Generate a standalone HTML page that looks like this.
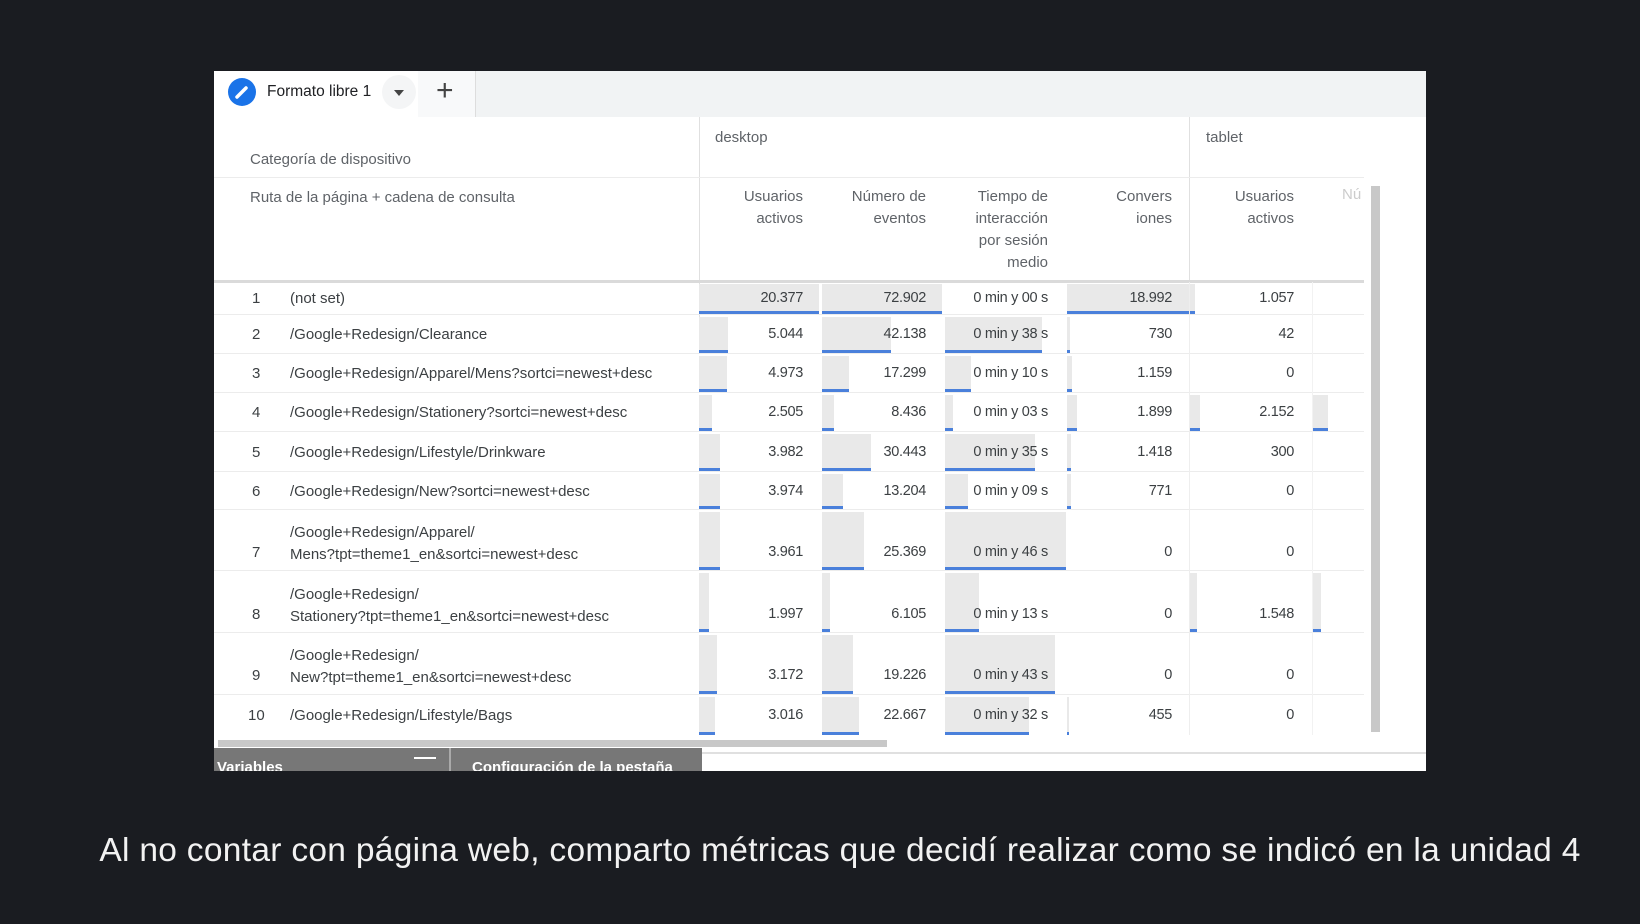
<!DOCTYPE html>
<html><head><meta charset="utf-8"><style>
*{margin:0;padding:0;box-sizing:border-box}
body{width:1640px;height:924px;background:#1a1c21;position:relative;overflow:hidden;font-family:"Liberation Sans",sans-serif;color:#3c4043}
#p{position:absolute;left:214px;top:71px;width:1212px;height:700px;background:#fff;overflow:hidden}
.a{position:absolute}
.row{position:absolute;left:0;width:1150px;border-bottom:1px solid #ececec;font-size:15px}
.g{position:absolute;bottom:0;top:2px;background:#e9e9e9;border-bottom:3px solid #4a80db}
.t{position:absolute;white-space:nowrap}
.n{position:absolute;white-space:nowrap;text-align:right;font-size:14.5px;letter-spacing:-0.3px}
.hd{position:absolute;text-align:right;font-size:15px;line-height:22px;color:#5f6368}
</style></head><body>
<div id="p">
 <div class="a" style="left:0;top:0;width:1212px;height:46px;background:#f1f3f4"></div>
 <div class="a" style="left:0;top:0;width:204px;height:46px;background:#fff"></div>
 <div class="a" style="left:204px;top:0;width:58px;height:46px;background:#f8f9fa;border-right:1px solid #ddd"></div>
 <div class="a" style="left:14px;top:7px;width:28px;height:28px;border-radius:50%;background:#1a73e8"></div>
 <svg class="a" style="left:14px;top:7px" width="28" height="28"><path d="M9 19 L18 10" stroke="#fff" stroke-width="3.5" stroke-linecap="round"/></svg>
 <div class="t" style="left:53px;top:12px;font-size:15.5px;color:#202124">Formato libre 1</div>
 <div class="a" style="left:168px;top:4px;width:34px;height:34px;border-radius:50%;background:#f4f5f6"></div>
 <div class="a" style="left:180px;top:19px;border-left:5px solid transparent;border-right:5px solid transparent;border-top:6px solid #444"></div>
 <div class="t" style="left:222px;top:3px;font-size:30px;color:#444;font-weight:300">+</div>

 <div class="a" style="left:485px;top:46px;width:1px;height:236px;background:#e0e0e0"></div>
 <div class="a" style="left:975px;top:46px;width:1px;height:236px;background:#e0e0e0"></div>
 <div class="a" style="left:0;top:106px;width:1150px;height:1px;background:#ececec"></div>
 <div class="t" style="left:501px;top:58px;font-size:15px;color:#5f6368">desktop</div>
 <div class="t" style="left:992px;top:58px;font-size:15px;color:#5f6368">tablet</div>
 <div class="t" style="left:36px;top:80px;font-size:15px;color:#5f6368">Categoría de dispositivo</div>
 <div class="t" style="left:36px;top:118px;font-size:15px;color:#5f6368">Ruta de la página + cadena de consulta</div>
 <div class="hd" style="right:623px;top:115px">Usuarios<br>activos</div>
 <div class="hd" style="right:500px;top:115px">Número de<br>eventos</div>
 <div class="hd" style="right:378px;top:115px">Tiempo de<br>interacción<br>por sesión<br>medio</div>
 <div class="hd" style="right:254px;top:115px">Convers<br>iones</div>
 <div class="hd" style="right:132px;top:115px">Usuarios<br>activos</div>
 <div class="t" style="left:1128px;top:115px;font-size:15px;color:#ccc">Nú</div>
 <div class="a" style="left:0;top:209px;width:1150px;height:3px;background:#dadada"></div>

 <div class="row" style="top:211px;height:33px">
  <b class="g" style="left:485px;width:120px"></b><b class="g" style="left:608px;width:120px"></b><b class="g" style="left:853px;width:128px"></b>
  <span class="t" style="left:38px;top:8px">1</span><span class="t" style="left:76px;top:8px">(not set)</span>
  <span class="n" style="right:561px;top:8px">20.377</span><span class="n" style="right:438px;top:8px">72.902</span><span class="n" style="right:316px;top:8px">0 min y 00 s</span><span class="n" style="right:192px;top:8px">18.992</span><span class="n" style="right:70px;top:8px">1.057</span>
 </div>
 <div class="row" style="top:244px;height:39px">
  <b class="g" style="left:485px;width:29px"></b><b class="g" style="left:608px;width:69px"></b><b class="g" style="left:731px;width:97px"></b><b class="g" style="left:853px;width:3px"></b>
  <span class="t" style="left:38px;top:11px">2</span><span class="t" style="left:76px;top:11px">/Google+Redesign/Clearance</span>
  <span class="n" style="right:561px;top:11px">5.044</span><span class="n" style="right:438px;top:11px">42.138</span><span class="n" style="right:316px;top:11px">0 min y 38 s</span><span class="n" style="right:192px;top:11px">730</span><span class="n" style="right:70px;top:11px">42</span>
 </div>
 <div class="row" style="top:283px;height:39px">
  <b class="g" style="left:485px;width:28px"></b><b class="g" style="left:608px;width:27px"></b><b class="g" style="left:731px;width:26px"></b><b class="g" style="left:853px;width:5px"></b>
  <span class="t" style="left:38px;top:11px">3</span><span class="t" style="left:76px;top:11px">/Google+Redesign/Apparel/Mens?sortci=newest+desc</span>
  <span class="n" style="right:561px;top:11px">4.973</span><span class="n" style="right:438px;top:11px">17.299</span><span class="n" style="right:316px;top:11px">0 min y 10 s</span><span class="n" style="right:192px;top:11px">1.159</span><span class="n" style="right:70px;top:11px">0</span>
 </div>
 <div class="row" style="top:322px;height:39px">
  <b class="g" style="left:485px;width:13px"></b><b class="g" style="left:608px;width:12px"></b><b class="g" style="left:731px;width:8px"></b><b class="g" style="left:853px;width:10px"></b><b class="g" style="left:975px;width:11px"></b><b class="g" style="left:1098px;width:16px"></b>
  <span class="t" style="left:38px;top:11px">4</span><span class="t" style="left:76px;top:11px">/Google+Redesign/Stationery?sortci=newest+desc</span>
  <span class="n" style="right:561px;top:11px">2.505</span><span class="n" style="right:438px;top:11px">8.436</span><span class="n" style="right:316px;top:11px">0 min y 03 s</span><span class="n" style="right:192px;top:11px">1.899</span><span class="n" style="right:70px;top:11px">2.152</span>
 </div>
 <div class="row" style="top:361px;height:40px">
  <b class="g" style="left:485px;width:21px"></b><b class="g" style="left:608px;width:49px"></b><b class="g" style="left:731px;width:90px"></b><b class="g" style="left:853px;width:4px"></b>
  <span class="t" style="left:38px;top:12px">5</span><span class="t" style="left:76px;top:12px">/Google+Redesign/Lifestyle/Drinkware</span>
  <span class="n" style="right:561px;top:12px">3.982</span><span class="n" style="right:438px;top:12px">30.443</span><span class="n" style="right:316px;top:12px">0 min y 35 s</span><span class="n" style="right:192px;top:12px">1.418</span><span class="n" style="right:70px;top:12px">300</span>
 </div>
 <div class="row" style="top:401px;height:38px">
  <b class="g" style="left:485px;width:21px"></b><b class="g" style="left:608px;width:21px"></b><b class="g" style="left:731px;width:23px"></b><b class="g" style="left:853px;width:4px"></b>
  <span class="t" style="left:38px;top:11px">6</span><span class="t" style="left:76px;top:11px">/Google+Redesign/New?sortci=newest+desc</span>
  <span class="n" style="right:561px;top:11px">3.974</span><span class="n" style="right:438px;top:11px">13.204</span><span class="n" style="right:316px;top:11px">0 min y 09 s</span><span class="n" style="right:192px;top:11px">771</span><span class="n" style="right:70px;top:11px">0</span>
 </div>
 <div class="row" style="top:439px;height:61px">
  <b class="g" style="left:485px;width:21px"></b><b class="g" style="left:608px;width:42px"></b><b class="g" style="left:731px;width:121px"></b>
  <span class="t" style="left:38px;top:34px">7</span><span class="t" style="left:76px;top:12px;line-height:22px">/Google+Redesign/Apparel/<br>Mens?tpt=theme1_en&amp;sortci=newest+desc</span>
  <span class="n" style="right:561px;top:34px">3.961</span><span class="n" style="right:438px;top:34px">25.369</span><span class="n" style="right:316px;top:34px">0 min y 46 s</span><span class="n" style="right:192px;top:34px">0</span><span class="n" style="right:70px;top:34px">0</span>
 </div>
 <div class="row" style="top:500px;height:62px">
  <b class="g" style="left:485px;width:10px"></b><b class="g" style="left:608px;width:8px"></b><b class="g" style="left:731px;width:34px"></b><b class="g" style="left:975px;width:8px"></b><b class="g" style="left:1098px;width:9px"></b>
  <span class="t" style="left:38px;top:35px">8</span><span class="t" style="left:76px;top:13px;line-height:22px">/Google+Redesign/<br>Stationery?tpt=theme1_en&amp;sortci=newest+desc</span>
  <span class="n" style="right:561px;top:35px">1.997</span><span class="n" style="right:438px;top:35px">6.105</span><span class="n" style="right:316px;top:35px">0 min y 13 s</span><span class="n" style="right:192px;top:35px">0</span><span class="n" style="right:70px;top:35px">1.548</span>
 </div>
 <div class="row" style="top:562px;height:62px">
  <b class="g" style="left:485px;width:18px"></b><b class="g" style="left:608px;width:31px"></b><b class="g" style="left:731px;width:110px"></b>
  <span class="t" style="left:38px;top:34px">9</span><span class="t" style="left:76px;top:12px;line-height:22px">/Google+Redesign/<br>New?tpt=theme1_en&amp;sortci=newest+desc</span>
  <span class="n" style="right:561px;top:34px">3.172</span><span class="n" style="right:438px;top:34px">19.226</span><span class="n" style="right:316px;top:34px">0 min y 43 s</span><span class="n" style="right:192px;top:34px">0</span><span class="n" style="right:70px;top:34px">0</span>
 </div>
 <div class="row" style="top:624px;height:40px;border-bottom:none">
  <b class="g" style="left:485px;width:16px"></b><b class="g" style="left:608px;width:37px"></b><b class="g" style="left:731px;width:84px"></b><b class="g" style="left:853px;width:2px"></b>
  <span class="t" style="left:34px;top:12px">10</span><span class="t" style="left:76px;top:12px">/Google+Redesign/Lifestyle/Bags</span>
  <span class="n" style="right:561px;top:12px">3.016</span><span class="n" style="right:438px;top:12px">22.667</span><span class="n" style="right:316px;top:12px">0 min y 32 s</span><span class="n" style="right:192px;top:12px">455</span><span class="n" style="right:70px;top:12px">0</span>
 </div>
 <div class="a" style="left:975px;top:211px;width:1px;height:453px;background:#eee"></div>
 <div class="a" style="left:1098px;top:211px;width:1px;height:453px;background:#f2f2f2"></div>
 <div class="a" style="left:1157px;top:115px;width:9px;height:546px;background:#c8c8c8"></div>
 <div class="a" style="left:4px;top:669px;width:669px;height:7px;background:#c8c8c8"></div>
 <div class="a" style="left:0;top:681px;width:1212px;height:2px;background:#e0e0e0"></div>
 <div class="a" style="left:0;top:677px;width:488px;height:30px;background:#777"></div>
 <div class="a" style="left:235px;top:677px;width:2px;height:30px;background:#aaa"></div>
 <div class="a" style="left:200px;top:686px;width:22px;height:2px;background:#fff"></div>
 <div class="t" style="left:3px;top:688px;font-size:15px;font-weight:bold;color:#fff">Variables</div>
 <div class="t" style="left:258px;top:688px;font-size:15px;font-weight:bold;color:#fff">Configuración de la pestaña</div>
</div>
<div class="t" style="left:60px;top:832px;width:1560px;text-align:center;font-size:33.5px;color:#f2f2f2;letter-spacing:0.3px">Al no contar con página web, comparto métricas que decidí realizar como se indicó en la unidad 4</div>
</body></html>
